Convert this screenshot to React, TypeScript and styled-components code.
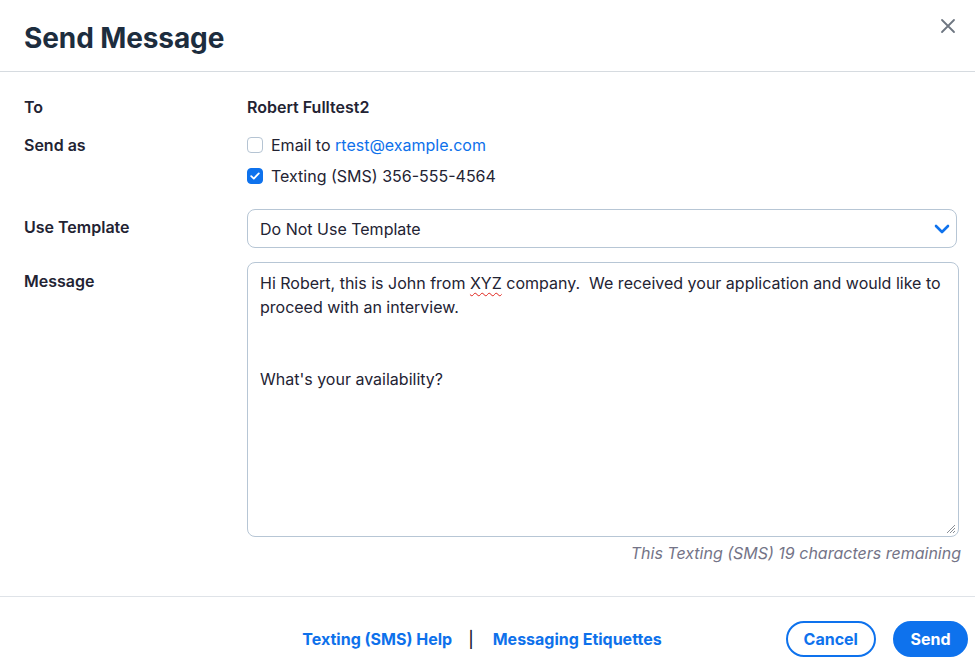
import styled, { createGlobalStyle } from 'styled-components';

const GlobalStyle = createGlobalStyle`
  html, body {
    margin: 0;
    padding: 0;
    background: #ffffff;
  }
  body {
    font-family: Inter, "Noto Sans", "Liberation Sans", sans-serif;
    color: #232333;
  }
`;

const Dialog = styled.div`
  width: 975px;
  height: 660px;
  display: flex;
  flex-direction: column;
  background: #fff;
  overflow: hidden;
`;

const Header = styled.div`
  height: 72px;
  flex-shrink: 0;
  box-sizing: border-box;
  padding: 0 24px;
  display: flex;
  align-items: center;
  border-bottom: 1px solid #d6dbe0;
  position: relative;
`;

const Title = styled.h1`
  margin: 0;
  padding-top: 4px;
  font-size: 28px;
  font-weight: 700;
  color: #1d2d3e;
  letter-spacing: -0.1px;
`;

const CloseButton = styled.button`
  position: absolute;
  top: 16px;
  right: 17px;
  width: 20px;
  height: 20px;
  padding: 0;
  border: none;
  background: none;
  display: flex;
  align-items: center;
  justify-content: center;
  cursor: pointer;
`;

const Body = styled.div`
  flex-shrink: 0;
  padding: 23px 16px 0 24px;
  display: grid;
  grid-template-columns: 223px 1fr;
  align-content: start;
`;

const Label = styled.div<{ $top?: number }>`
  font-size: 16px;
  font-weight: 600;
  color: #232333;
  line-height: 24px;
  padding-top: ${p => p.$top ?? 0}px;
`;

const Value = styled.div`
  font-size: 16px;
  font-weight: 600;
  color: #232333;
  line-height: 24px;
`;

const Row = styled.div<{ $gap?: number }>`
  display: contents;
  & > * {
    margin-bottom: ${p => p.$gap ?? 0}px;
  }
`;

const Options = styled.div`
  display: flex;
  flex-direction: column;
  gap: 7px;
`;

const Option = styled.label`
  display: flex;
  align-items: center;
  gap: 8px;
  font-size: 16px;
  color: #232333;
  line-height: 24px;
  cursor: pointer;
`;

const Box = styled.span<{ $checked?: boolean }>`
  width: 16px;
  height: 16px;
  box-sizing: border-box;
  border-radius: 4px;
  border: 1px solid ${p => (p.$checked ? '#0e72ed' : '#b5c4d3')};
  background: ${p => (p.$checked ? '#0e72ed' : '#fff')};
  display: inline-flex;
  align-items: center;
  justify-content: center;
`;

const Link = styled.a`
  color: #0e71eb;
  text-decoration: none;
`;

const Select = styled.div`
  height: 39px;
  margin-right: 2px;
  box-sizing: border-box;
  border: 1px solid #b7c6d5;
  border-radius: 8px;
  padding: 0 6px 0 12px;
  display: flex;
  align-items: center;
  justify-content: space-between;
  font-size: 16px;
  color: #232333;
`;

const TextArea = styled.div`
  position: relative;
  height: 275px;
  box-sizing: border-box;
  border: 1px solid #b7c6d5;
  border-radius: 8px;
  padding: 8px 12px;
  font-size: 16px;
  line-height: 24px;
  color: #232333;
  white-space: pre-wrap;
`;

const Misspelled = styled.span`
  text-decoration: underline wavy #e0241c;
  text-decoration-thickness: 1px;
  text-underline-offset: 3px;
`;

const Grip = styled.svg`
  position: absolute;
  right: 2px;
  bottom: 2px;
`;

const Hint = styled.div`
  grid-column: 2;
  text-align: right;
  font-size: 16px;
  font-style: italic;
  color: #747487;
  line-height: 24px;
  padding: 4px 0 0;
  margin-right: -2px;
`;

const Footer = styled.div`
  flex-shrink: 0;
  border-top: 1px solid #dfe3e8;
  margin-top: 31px;
  padding: 24px 7px 0 8px;
  display: grid;
  grid-template-columns: 1fr auto 1fr;
  align-items: center;
`;

const Links = styled.div`
  grid-column: 2;
  display: flex;
  align-items: center;
  gap: 16px;
  font-size: 16px;
  font-weight: 700;
  margin-right: 12px;
`;

const Divider = styled.span`
  color: #232333;
  font-weight: 500;
  margin-right: 3px;
`;

const Actions = styled.div`
  justify-self: end;
  display: flex;
  gap: 17px;
`;

const Button = styled.button<{ $primary?: boolean }>`
  height: 36px;
  padding: 0 ${p => (p.$primary ? 15.5 : 16)}px;
  border-radius: 18px;
  font-family: inherit;
  font-size: 16px;
  font-weight: 700;
  border: 2px solid #0e72ed;
  background: ${p => (p.$primary ? '#0e72ed' : '#fff')};
  color: ${p => (p.$primary ? '#fff' : '#0e72ed')};
  cursor: pointer;
`;

const message = `Hi Robert, this is John from `;
const message2 = ` company.  We received your application and would like to proceed with an interview.


What's your availability?`;

export default function App() {
  return (
    <>
      <GlobalStyle />
      <Dialog>
        <Header>
          <Title>Send Message</Title>
          <CloseButton aria-label="Close">
            <svg width="16" height="16" viewBox="0 0 16 16">
              <path d="M2 2 L14 14 M14 2 L2 14" stroke="#6e7681" strokeWidth="1.8" strokeLinecap="round" />
            </svg>
          </CloseButton>
        </Header>

        <Body>
          <Row $gap={14}>
            <Label>To</Label>
            <Value>Robert Fulltest2</Value>
          </Row>
          <Row $gap={21}>
            <Label>Send as</Label>
            <Options>
              <Option>
                <Box />
                <span>
                  Email to <Link href="#">rtest@example.com</Link>
                </span>
              </Option>
              <Option>
                <Box $checked>
                  <svg width="10" height="8" viewBox="0 0 10 8">
                    <path d="M1.2 4.2 L3.8 6.6 L8.8 1.4" stroke="#fff" strokeWidth="1.8" fill="none" strokeLinecap="round" strokeLinejoin="round" />
                  </svg>
                </Box>
                <span>Texting (SMS) 356-555-4564</span>
              </Option>
            </Options>
          </Row>
          <Row $gap={14}>
            <Label $top={6}>Use Template</Label>
            <Select>
              <span>Do Not Use Template</span>
              <svg width="16" height="10" viewBox="0 0 16 10">
                <path d="M2 2 L8 8 L14 2" stroke="#0e72ed" strokeWidth="2.6" fill="none" strokeLinecap="round" strokeLinejoin="round" />
              </svg>
            </Select>
          </Row>
          <Row>
            <Label $top={7}>Message</Label>
            <TextArea>
              {message}
              <Misspelled>XYZ</Misspelled>
              {message2}
              <Grip width="12" height="12" viewBox="0 0 12 12">
                <path d="M11 3 L3 11 M11 6 L6 11 M11 9 L9 11" stroke="#8a8f96" strokeWidth="1" />
              </Grip>
            </TextArea>
          </Row>
          <Hint>This Texting (SMS) 19 characters remaining</Hint>
        </Body>

        <Footer>
          <Links>
            <Link href="#">Texting (SMS) Help</Link>
            <Divider>|</Divider>
            <Link href="#">Messaging Etiquettes</Link>
          </Links>
          <Actions>
            <Button>Cancel</Button>
            <Button $primary>Send</Button>
          </Actions>
        </Footer>
      </Dialog>
    </>
  );
}
